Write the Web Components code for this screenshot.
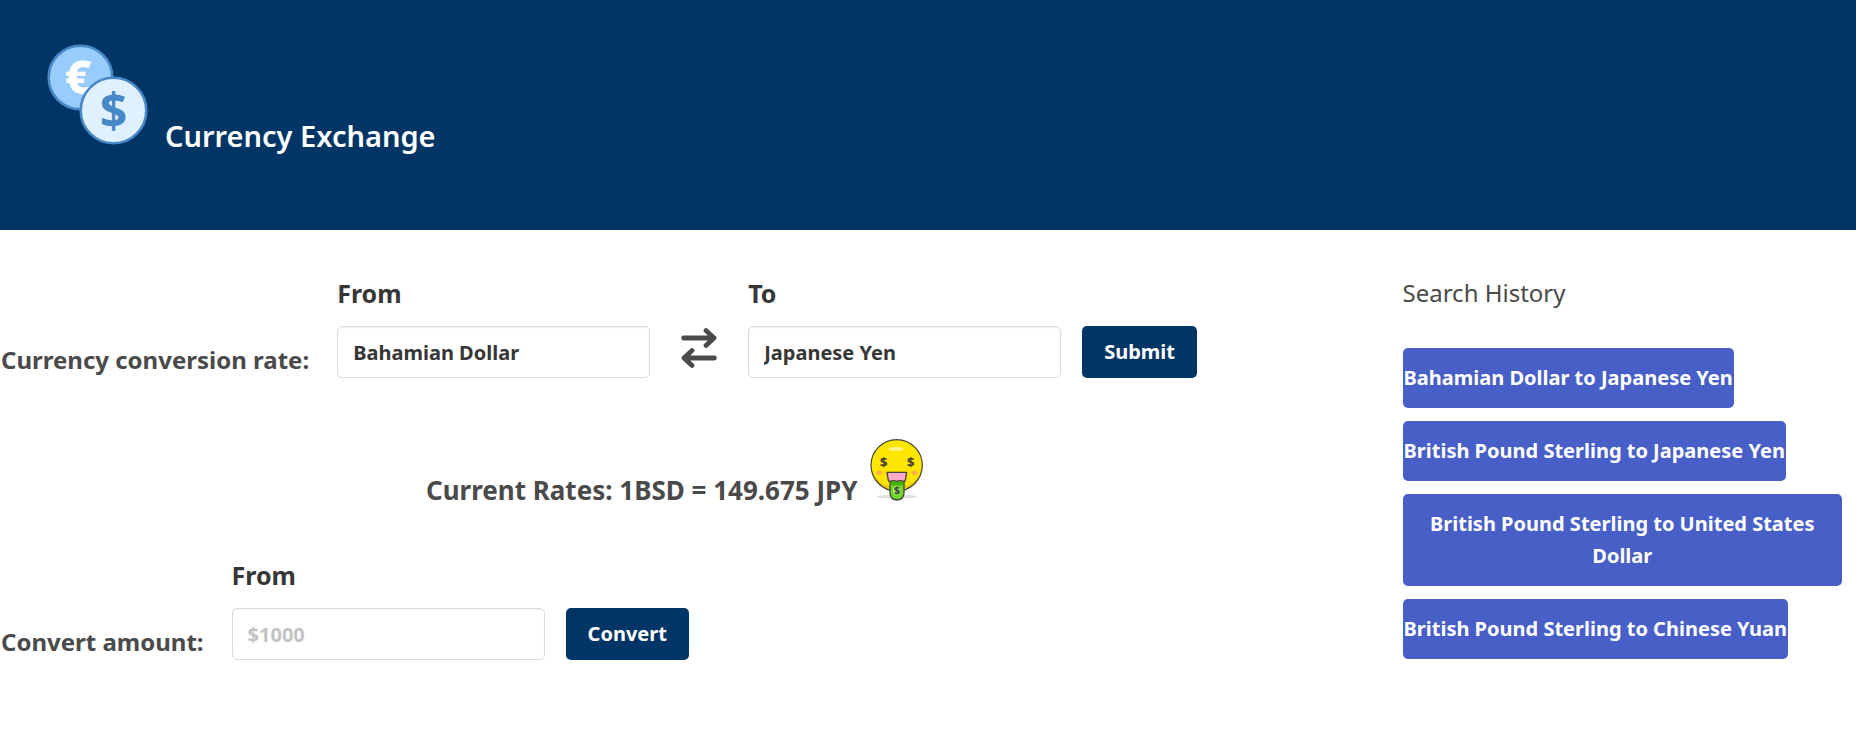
<!DOCTYPE html>
<html lang="en">
<head>
<meta charset="utf-8">
<title>Currency Exchange</title>
<style>
  body { margin: 0; background: #fff; color: #4a4a4a; font-family: "Noto Sans", "Open Sans", sans-serif; }
</style>
</head>
<body>
<exchange-app></exchange-app>

<script>
function define(name, html) {
  const template = document.createElement('template');
  template.innerHTML = html;
  customElements.define(name, class extends HTMLElement {
    constructor() {
      super();
      this.attachShadow({ mode: 'open' }).append(template.content.cloneNode(true));
    }
  });
}

define('coins-logo', `
  <style>
    :host { display: block; width: 102px; height: 102px; }
    svg { display: block; width: 100%; height: 100%; }
    text { font-family: "Noto Sans", sans-serif; text-anchor: middle; }
  </style>
  <svg viewBox="0 0 102 102" aria-hidden="true">
    <circle cx="33.5" cy="33.5" r="31.8" fill="#98ccfd" stroke="#4788c7" stroke-width="2.6"/>
    <text x="31" y="50" font-size="46" font-weight="800" fill="#fff">€</text>
    <circle cx="66.5" cy="66.5" r="32.8" fill="#dff0fe" stroke="#4788c7" stroke-width="2.6"/>
    <text x="66.5" y="84" font-size="48" font-weight="700" fill="#4788c7">$</text>
  </svg>`);

define('page-hero', `
  <style>
    :host { display: block; background: #003566; padding: 44px 47px 84px; }
    header { display: flex; align-items: flex-end; gap: 16px; }
    h1 { margin: 0 0 -10px; color: #fff; font-size: 29px; line-height: 40px; font-weight: 600; }
  </style>
  <header><coins-logo></coins-logo><h1><slot></slot></h1></header>`);

define('swap-arrows', `
  <style>
    :host { display: block; width: 36px; height: 40px; margin: 0 31px 10px; }
    svg { display: block; width: 100%; height: 100%; }
  </style>
  <svg viewBox="0 0 36 40" fill="none" stroke="#4a4a4a" stroke-width="4.8" stroke-linecap="round" stroke-linejoin="round" aria-hidden="true">
    <path d="M2.6 10H33M25 2.6L33 10L25 17.4"/>
    <path d="M33.4 30H3M11 22.6L3 30L11 37.4"/>
  </svg>`);

define('money-face', `
  <style>
    :host { display: block; width: 54px; height: 62px; }
    svg { display: block; width: 100%; height: 100%; }
    text { font-family: "Noto Sans", sans-serif; font-weight: 800; text-anchor: middle; fill: #45413c; }
  </style>
  <svg viewBox="29 25 162 186" aria-hidden="true">
    <ellipse cx="109" cy="198" rx="61" ry="6" fill="#e0e0e0"/>
    <circle cx="109" cy="104" r="77" fill="#ebcb00"/>
    <ellipse cx="109" cy="99" rx="77" ry="72" fill="#ffe500"/>
    <ellipse cx="107" cy="55" rx="23" ry="6" fill="#fff48c"/>
    <circle cx="109" cy="104" r="77" fill="none" stroke="#45413c" stroke-width="3.5"/>
    <ellipse cx="57" cy="126" rx="9" ry="6" fill="#ffaa54"/>
    <ellipse cx="162" cy="126" rx="9" ry="6" fill="#ffaa54"/>
    <text x="70" y="110" font-size="39">$</text>
    <text x="151" y="110" font-size="39">$</text>
    <path d="M80 125H139L135 149Q134 153 129 153H90Q85 153 84 149Z" fill="#ffaacb" stroke="#45413c" stroke-width="4" stroke-linejoin="round"/>
    <path d="M89 153Q99 147 109 153Q119 147 131 153V187Q130 207 110 208Q90 207 89 187Z" fill="#6dd627" stroke="#45413c" stroke-width="4" stroke-linejoin="round"/>
    <path d="M91 155Q100 150 109 155Q119 150 129 155V164H91Z" fill="#46b000"/>
    <ellipse cx="109" cy="180" rx="12" ry="14" fill="#9ceb60"/>
    <text x="110" y="191" font-size="32">$</text>
  </svg>`);

/* Labelled text box; attributes: label, value, placeholder */
customElements.define('text-field', class extends HTMLElement {
  constructor() {
    super();
    this.attachShadow({ mode: 'open' }).innerHTML = `
      <style>
        :host { display: block; flex: 0 1 313px; min-width: 120px; }
        label { display: block; margin-bottom: 15px; color: #363636; font-size: 25px; line-height: 36px; font-weight: 700; }
        input { display: block; box-sizing: border-box; width: 100%; height: 52px; padding: 0 15px; border: 1px solid #dbdbdb;
          border-radius: 5px; background: #fff; box-shadow: inset 0 1px 2px rgba(10, 10, 10, .05); color: #363636;
          font: 700 20px/30px "Noto Sans", "Open Sans", sans-serif; }
        input::placeholder { color: #c3c3c3; opacity: 1; }
      </style>
      <label for="box"></label><input id="box" type="text">`;
    const input = this.shadowRoot.querySelector('input');
    this.shadowRoot.querySelector('label').textContent = this.getAttribute('label');
    input.value = this.getAttribute('value') || '';
    input.placeholder = this.getAttribute('placeholder') || '';
  }
});

define('action-button', `
  <style>
    :host { display: block; margin-left: 21px; }
    button { display: block; height: 52px; padding: 0 22px; border: 0; border-radius: 5px; background: #003566; color: #fff;
      font: 700 20px/30px "Noto Sans", "Open Sans", sans-serif; cursor: pointer; }
  </style>
  <button type="button"><slot></slot></button>`);

define('form-row', `
  <style>
    :host { display: flex; align-items: flex-end; }
    .caption { padding-left: 1px; margin-right: 28px; font-size: 24px; line-height: 36px; font-weight: 700; white-space: nowrap; }
  </style>
  <div class="caption"><slot name="caption"></slot></div><slot></slot>`);

define('rate-line', `
  <style>
    :host { display: flex; justify-content: center; align-items: flex-end; gap: 12px; margin: 61px 41px 56px 0; }
    p { margin: 0 0 -7px; font-size: 26px; line-height: 36px; font-weight: 700; }
  </style>
  <p><slot></slot></p><money-face></money-face>`);

define('history-item', `
  <style>
    :host { display: block; max-width: 100%; }
    button { display: block; max-width: 100%; padding: 13px 0; border: 1px solid transparent; border-radius: 5px; background: #485fc7;
      color: #fff; font: 700 20px/32px "Noto Sans", "Open Sans", sans-serif; text-align: center; cursor: pointer; }
  </style>
  <button type="button"><slot></slot></button>`);

define('search-history', `
  <style>
    :host { display: flex; flex-direction: column; align-items: flex-start; gap: 13px; padding: 0 12px; }
    h2 { margin: 0 0 24px; font-size: 24px; line-height: 36px; font-weight: 400; }
  </style>
  <h2>Search History</h2><slot></slot>`);

define('exchange-app', `
  <style>
    :host { display: block; }
    main { display: grid; grid-template-columns: 3fr 1fr; padding: 45px 2px 45px 0; }
  </style>
  <page-hero>Currency Exchange</page-hero>
  <main>
    <section>
      <form-row>
        <span slot="caption">Currency conversion rate:</span>
        <text-field label="From" value="Bahamian Dollar"></text-field>
        <swap-arrows></swap-arrows>
        <text-field label="To" value="Japanese Yen"></text-field>
        <action-button>Submit</action-button>
      </form-row>
      <rate-line>Current Rates: 1BSD = 149.675 JPY</rate-line>
      <form-row>
        <span slot="caption">Convert amount:</span>
        <text-field label="From" placeholder="$1000"></text-field>
        <action-button>Convert</action-button>
      </form-row>
    </section>
    <search-history>
      <history-item>Bahamian Dollar to Japanese Yen</history-item>
      <history-item>British Pound Sterling to Japanese Yen</history-item>
      <history-item>British Pound Sterling to United States Dollar</history-item>
      <history-item>British Pound Sterling to Chinese Yuan</history-item>
    </search-history>
  </main>`);
</script>
</body>
</html>
